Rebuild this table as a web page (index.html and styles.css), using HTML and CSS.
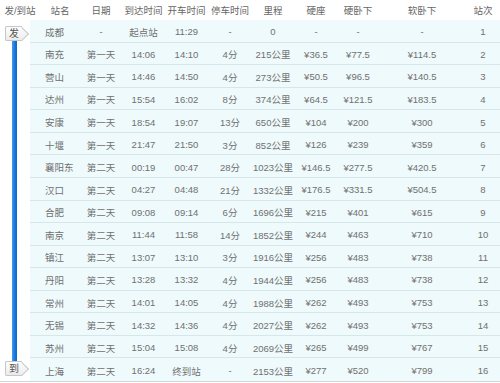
FILE: index.html
```html
<!DOCTYPE html>
<html lang="zh-CN">
<head>
<meta charset="utf-8">
<title>列车时刻表</title>
<link rel="stylesheet" href="styles.css">
</head>
<body>
<div class="page">
  <div class="head">
    <span>发/到站</span><span>站名</span><span>日期</span><span>到达时间</span><span>开车时间</span><span>停车时间</span><span>里程</span><span>硬座</span><span>硬卧下</span><span>软卧下</span><span>站次</span>
  </div>
  <div class="body">
    <div class="rail">
      <div class="tag">发</div>
      <div class="bar"></div>
      <div class="tag">到</div>
    </div>
    <div class="rows">
      <div class="row"><span class="name">成都</span><span>-</span><span>起点站</span><span>11:29</span><span>-</span><span>0</span><span>-</span><span>-</span><span>-</span><span>1</span></div>
      <div class="row"><span class="name">南充</span><span>第一天</span><span>14:06</span><span>14:10</span><span>4分</span><span>215公里</span><span>¥36.5</span><span>¥77.5</span><span>¥114.5</span><span>2</span></div>
      <div class="row"><span class="name">营山</span><span>第一天</span><span>14:46</span><span>14:50</span><span>4分</span><span>273公里</span><span>¥50.5</span><span>¥96.5</span><span>¥140.5</span><span>3</span></div>
      <div class="row"><span class="name">达州</span><span>第一天</span><span>15:54</span><span>16:02</span><span>8分</span><span>374公里</span><span>¥64.5</span><span>¥121.5</span><span>¥183.5</span><span>4</span></div>
      <div class="row"><span class="name">安康</span><span>第一天</span><span>18:54</span><span>19:07</span><span>13分</span><span>650公里</span><span>¥104</span><span>¥200</span><span>¥300</span><span>5</span></div>
      <div class="row"><span class="name">十堰</span><span>第一天</span><span>21:47</span><span>21:50</span><span>3分</span><span>852公里</span><span>¥126</span><span>¥239</span><span>¥359</span><span>6</span></div>
      <div class="row"><span class="name">襄阳东</span><span>第二天</span><span>00:19</span><span>00:47</span><span>28分</span><span>1023公里</span><span>¥146.5</span><span>¥277.5</span><span>¥420.5</span><span>7</span></div>
      <div class="row"><span class="name">汉口</span><span>第二天</span><span>04:27</span><span>04:48</span><span>21分</span><span>1332公里</span><span>¥176.5</span><span>¥331.5</span><span>¥504.5</span><span>8</span></div>
      <div class="row"><span class="name">合肥</span><span>第二天</span><span>09:08</span><span>09:14</span><span>6分</span><span>1696公里</span><span>¥215</span><span>¥401</span><span>¥615</span><span>9</span></div>
      <div class="row"><span class="name">南京</span><span>第二天</span><span>11:44</span><span>11:58</span><span>14分</span><span>1852公里</span><span>¥244</span><span>¥463</span><span>¥710</span><span>10</span></div>
      <div class="row"><span class="name">镇江</span><span>第二天</span><span>13:07</span><span>13:10</span><span>3分</span><span>1916公里</span><span>¥256</span><span>¥483</span><span>¥738</span><span>11</span></div>
      <div class="row"><span class="name">丹阳</span><span>第二天</span><span>13:28</span><span>13:32</span><span>4分</span><span>1944公里</span><span>¥256</span><span>¥483</span><span>¥738</span><span>12</span></div>
      <div class="row"><span class="name">常州</span><span>第二天</span><span>14:01</span><span>14:05</span><span>4分</span><span>1988公里</span><span>¥262</span><span>¥493</span><span>¥753</span><span>13</span></div>
      <div class="row"><span class="name">无锡</span><span>第二天</span><span>14:32</span><span>14:36</span><span>4分</span><span>2027公里</span><span>¥262</span><span>¥493</span><span>¥753</span><span>14</span></div>
      <div class="row"><span class="name">苏州</span><span>第二天</span><span>15:04</span><span>15:08</span><span>4分</span><span>2069公里</span><span>¥265</span><span>¥499</span><span>¥767</span><span>15</span></div>
      <div class="row"><span class="name">上海</span><span>第二天</span><span>16:24</span><span>终到站</span><span>-</span><span>2153公里</span><span>¥277</span><span>¥520</span><span>¥799</span><span>16</span></div>
    </div>
  </div>
</div>
</body>
</html>
```
FILE: styles.css
```css
html, body {
  margin: 0;
  padding: 0;
  background: #fff;
}

.page {
  width: 500px;
  font-family: "Liberation Sans", "Noto Sans CJK SC", sans-serif;
  font-size: 9.5px;
  color: #707070;
}

.head {
  display: grid;
  grid-template-columns: 40px 40px 42px 43px 43px 44px 42px 44px 40px 88px 34px;
  height: 20px;
  align-items: center;
  text-align: center;
  color: #666;
  white-space: nowrap;
}

.body {
  display: flex;
  height: 362px;
  box-sizing: border-box;
  border-bottom: 1px solid #cfd6d8;
}

.rail {
  width: 30px;
  display: flex;
  flex-direction: column;
  padding: 6px 0 5px;
  box-sizing: border-box;
}

.tag {
  position: relative;
  width: 17px;
  height: 15px;
  margin-left: 5px;
  box-sizing: border-box;
  border: 1px solid #c4c8ca;
  border-right: 0;
  border-radius: 2px 0 0 2px;
  background: linear-gradient(#ffffff, #ebebeb);
  color: #555;
  font-size: 10px;
  line-height: 13px;
  text-align: center;
  z-index: 1;
}

.tag::after {
  content: "";
  position: absolute;
  left: 11px;
  top: 1.5px;
  width: 9px;
  height: 9px;
  transform: rotate(45deg);
  border-top: 1px solid #c4c8ca;
  border-right: 1px solid #c4c8ca;
  background: linear-gradient(135deg, #fbfbfb, #ededed);
  z-index: -1;
}

.bar {
  flex: 1;
  width: 5px;
  margin-left: 12px;
  background: linear-gradient(to right, #4a9cec, #1474dc 60%, #0f68cc);
}

.rows {
  width: 470px;
  display: grid;
  grid-template-rows: repeat(16, 1fr);
  background: #eefafb;
}

.row {
  display: grid;
  grid-template-columns: 50px 42px 43px 43px 44px 42px 44px 40px 88px 34px;
  align-items: center;
  text-align: center;
  white-space: nowrap;
  border-bottom: 1px solid #d7e6e8;
  padding-top: 2px;
}

.row:last-child {
  border-bottom: 0;
}

.row .name {
  text-align: left;
  padding-left: 15px;
}
```
